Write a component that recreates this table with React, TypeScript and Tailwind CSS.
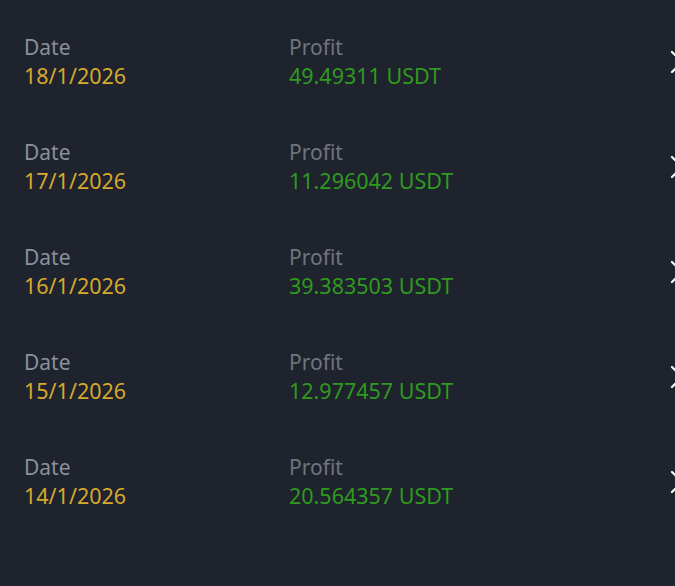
type Row = { date: string; profit: string };

const rows: Row[] = [
  { date: "18/1/2026", profit: "49.49311" },
  { date: "17/1/2026", profit: "11.296042" },
  { date: "16/1/2026", profit: "39.383503" },
  { date: "15/1/2026", profit: "12.977457" },
  { date: "14/1/2026", profit: "20.564357" },
];

// chevron is mostly cut off by the right edge of the screen
const Chevron = () => (
  <svg
    viewBox="0 0 24 24"
    className="mt-[9px] h-[40px] w-[40px] shrink-0 text-white"
    fill="none"
    stroke="currentColor"
    strokeWidth={1.3}
    strokeLinecap="round"
    strokeLinejoin="round"
  >
    <path d="m9 6 6 6-6 6" />
  </svg>
);

const ProfitRow = ({ row }: { row: Row }) => (
  <div className="flex h-[105px] items-start">
    <div className="flex w-[265px] shrink-0 flex-col">
      <span className="text-[21px] leading-[28px] text-[#8b909a]">Date</span>
      <span className="text-[21.5px] leading-[30px] text-[#d6a92e]">
        {row.date}
      </span>
    </div>
    <div className="flex w-[368px] shrink-0 flex-col">
      <span className="text-[21px] leading-[28px] text-[#70757d]">Profit</span>
      <span className="text-[21.5px] leading-[30px] text-[#2f9a1f]">
        {row.profit} USDT
      </span>
    </div>
    <Chevron />
  </div>
);

export default function App() {
  return (
    <div
      className="h-[586px] w-[675px] overflow-hidden bg-[#1e232d] pl-[24px] pt-[33px]"
      style={{ fontFamily: '"Noto Sans", "Open Sans", sans-serif' }}
    >
      {rows.map((r) => (
        <ProfitRow key={r.date} row={r} />
      ))}
    </div>
  );
}
